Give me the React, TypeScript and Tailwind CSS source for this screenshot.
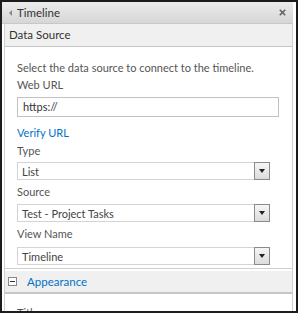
import { X } from 'lucide-react';

const font = { fontFamily: 'Lato, "Open Sans", sans-serif' };

const SelectBox = ({ value }: { value: string }) => (
  <div className="flex h-[18px] w-[253px] items-center border border-[#d4d4d4] bg-white">
    <span className="flex-1 pl-[4px] text-[11px] leading-none text-[#444]">{value}</span>
    <div className="mr-[-1px] flex h-[18px] w-[16px] items-center justify-center border border-[#8a8a8a] bg-gradient-to-b from-[#f6f6f6] to-[#dcdcdc]">
      <div className="h-0 w-0 border-x-[3px] border-t-[4px] border-x-transparent border-t-[#222]" />
    </div>
  </div>
);

export default function App() {
  return (
    <div
      className="flex h-[313px] w-[298px] flex-col overflow-hidden border-2 border-[#1c1c1c] bg-white"
      style={font}
    >
      {/* Header */}
      <div className="mr-[3px] flex h-[22px] shrink-0 items-center border-b border-[#c8c8c8] bg-gradient-to-b from-[#ececec] to-[#d6d6d6] pr-[6px]">
        <div className="ml-[7px] h-0 w-0 border-y-[3px] border-r-[3px] border-y-transparent border-r-[#888]" />
        <span className="ml-[5px] text-[11.5px] leading-none text-[#333]">Timeline</span>
        <X className="ml-auto h-[9px] w-[9px] text-[#666]" strokeWidth={4.5} />
      </div>

      <div className="ml-[2px] mr-[3px] flex flex-1 flex-col border-x border-[#d0d0d0]">
        {/* Data Source section */}
        <div className="flex h-[23px] shrink-0 items-center border-b border-[#c6c6c6] bg-[#f0f0f0] pl-[4px]">
          <span className="text-[11.5px] leading-none text-[#333]">Data Source</span>
        </div>

        <div className="flex flex-col pl-[12px] text-[#555]">
          <div className="mt-[12px] text-[11px] leading-[17px]">
            Select the data source to connect to the timeline.
          </div>
          <div className="text-[11px] leading-[17px]">Web URL</div>
          <div className="mt-[4px] flex h-[20px] w-[262px] items-center border border-[#c2c2c2] bg-white pl-[5px] text-[11px] text-[#333]">
            https://
          </div>
          <div className="mt-[7px] text-[11px] leading-[17px] text-[#0072c6]">Verify URL</div>
          <div className="mt-[1px] text-[11px] leading-[17px]">Type</div>
          <div className="mt-[3px]">
            <SelectBox value="List" />
          </div>
          <div className="mt-[3px] text-[11px] leading-[17px]">Source</div>
          <div className="mt-[4px]">
            <SelectBox value="Test - Project Tasks" />
          </div>
          <div className="mt-[3px] text-[11px] leading-[17px]">View Name</div>
          <div className="mt-[5px]">
            <SelectBox value="Timeline" />
          </div>
        </div>

        {/* Appearance section */}
        <div className="mt-[3px] h-[3px] border-t border-[#d0d0d0]" />
        <div className="flex h-[23px] shrink-0 items-center border-b-2 border-[#c6c6c6] bg-[#f0f0f0] pl-[3px]">
          <div className="flex h-[9px] w-[9px] items-center justify-center border border-[#888] bg-white">
            <div className="h-px w-[5px] bg-[#333]" />
          </div>
          <span className="ml-[10px] text-[11.5px] leading-none text-[#0072c6]">Appearance</span>
        </div>
        <div className="mt-[10px] pl-[12px] text-[11px] leading-[17px] text-[#555]">Title</div>
      </div>
    </div>
  );
}
